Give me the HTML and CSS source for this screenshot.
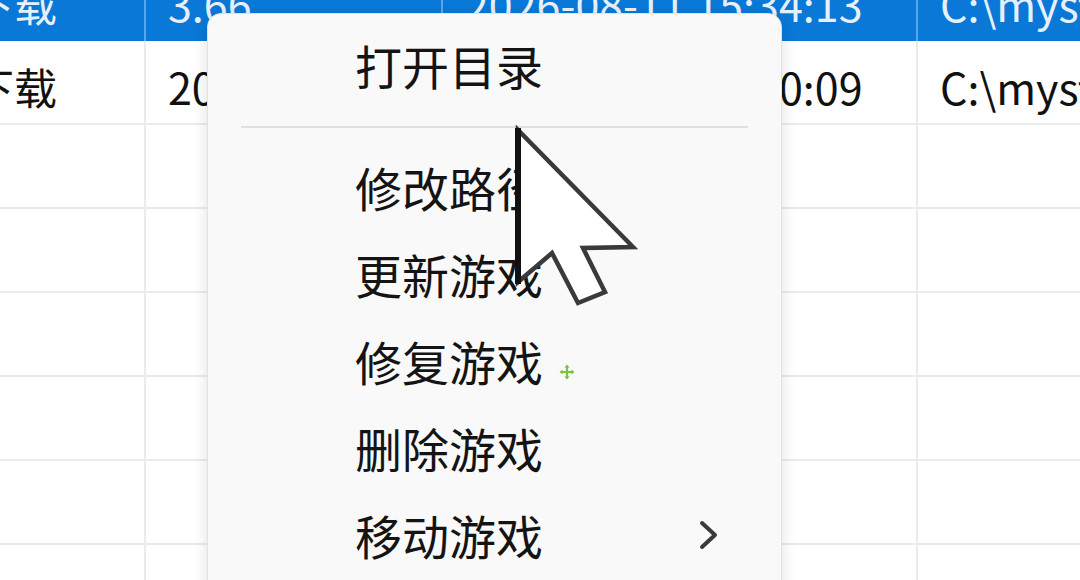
FILE: index.html
```html
<!DOCTYPE html>
<html lang="zh-CN">
<head>
<meta charset="utf-8">
<title>游戏列表</title>
<link rel="stylesheet" href="styles.css">
</head>
<body>
<div class="screen">
  <div class="table">
    <div class="row selected">
      <div class="cell">已下载</div>
      <div class="cell">3.66</div>
      <div class="cell">2026-08-11 15:34:13</div>
      <div class="cell">C:\mystery\games\one</div>
    </div>
    <div class="row">
      <div class="cell">已下载</div>
      <div class="cell">20.1</div>
      <div class="cell">2026-08-10 12:30:09</div>
      <div class="cell">C:\mystery\games\two</div>
    </div>
    <div class="row"><div class="cell"></div><div class="cell"></div><div class="cell"></div><div class="cell"></div></div>
    <div class="row"><div class="cell"></div><div class="cell"></div><div class="cell"></div><div class="cell"></div></div>
    <div class="row"><div class="cell"></div><div class="cell"></div><div class="cell"></div><div class="cell"></div></div>
    <div class="row"><div class="cell"></div><div class="cell"></div><div class="cell"></div><div class="cell"></div></div>
    <div class="row"><div class="cell"></div><div class="cell"></div><div class="cell"></div><div class="cell"></div></div>
    <div class="row"><div class="cell"></div><div class="cell"></div><div class="cell"></div><div class="cell"></div></div>
  </div>

  <div class="menu">
    <div class="item">打开目录</div>
    <div class="sep"></div>
    <div class="item">修改路径</div>
    <div class="item">更新游戏</div>
    <div class="item">修复游戏</div>
    <div class="item">删除游戏</div>
    <div class="item has-sub">移动游戏
      <svg class="chev" viewBox="0 0 24 34" width="24" height="34"><path d="M5 5 L18 17 L5 29" fill="none" stroke="#3a3a3a" stroke-width="4" stroke-linecap="round" stroke-linejoin="round"/></svg>
    </div>
  </div>

  <svg class="move-icon" viewBox="0 0 16 16" width="16" height="16">
    <path d="M8 2 V14 M2 8 H14" stroke="#7cc242" stroke-width="2.2" fill="none"/>
    <path d="M8 0.5 L10.5 3.5 H5.5 Z M8 15.5 L10.5 12.5 H5.5 Z M0.5 8 L3.5 5.5 V10.5 Z M15.5 8 L12.5 5.5 V10.5 Z" fill="#7cc242"/>
  </svg>

  <svg class="cursor" viewBox="0 0 135 190" width="135" height="190">
    <polygon points="8,8 8,160 42,131 68,181 95,170 73,126 123,125" fill="#ffffff" stroke="#3a3a3a" stroke-width="4.5" stroke-linejoin="miter"/>
    <line x1="8" y1="6" x2="8" y2="162" stroke="#111" stroke-width="6"/>
  </svg>
</div>
</body>
</html>
```

FILE: styles.css
```css
html, body {
  margin: 0;
  padding: 0;
  background: #ffffff;
}

.screen {
  position: relative;
  width: 1080px;
  height: 580px;
  overflow: hidden;
  background: #ffffff;
  font-family: "Noto Sans CJK SC", "Microsoft YaHei", sans-serif;
}

.table {
  margin-top: -43px;
  margin-left: -94px;
  display: flex;
  flex-direction: column;
}

.row {
  display: grid;
  grid-template-columns: 240px 297px 475px 300px;
  height: 84px;
  box-sizing: border-box;
  border-bottom: 2px solid #ebebeb;
  color: #111111;
}

.row.selected {
  background: #0a78d7;
  color: #e6f0fb;
  border-bottom: none;
}

.cell {
  box-sizing: border-box;
  border-right: 2px solid #ebebeb;
  padding: 8px 0 0 22px;
  display: flex;
  align-items: center;
  font-size: 43px;
  white-space: nowrap;
  overflow: hidden;
}

.row.selected .cell {
  border-right-color: #5aa5e6;
}

.menu {
  position: absolute;
  left: 207px;
  top: 13px;
  width: 575px;
  height: 620px;
  box-sizing: border-box;
  background: #f9f9f9;
  border: 1px solid #e2e2e2;
  border-radius: 14px;
  box-shadow: 0 4px 16px rgba(0, 0, 0, 0.12);
  padding-top: 7px;
  display: flex;
  flex-direction: column;
}

.item {
  height: 87px;
  display: flex;
  align-items: center;
  padding-left: 147px;
  padding-right: 60px;
  font-size: 47px;
  color: #141414;
  white-space: nowrap;
}

.item.has-sub {
  justify-content: space-between;
}

.chev {
  display: block;
}

.sep {
  height: 2px;
  background: #e0e0e0;
  margin: 18px 33px 15px 33px;
}

.move-icon {
  position: absolute;
  left: 559px;
  top: 364px;
}

.cursor {
  position: absolute;
  left: 510px;
  top: 122px;
}
```
